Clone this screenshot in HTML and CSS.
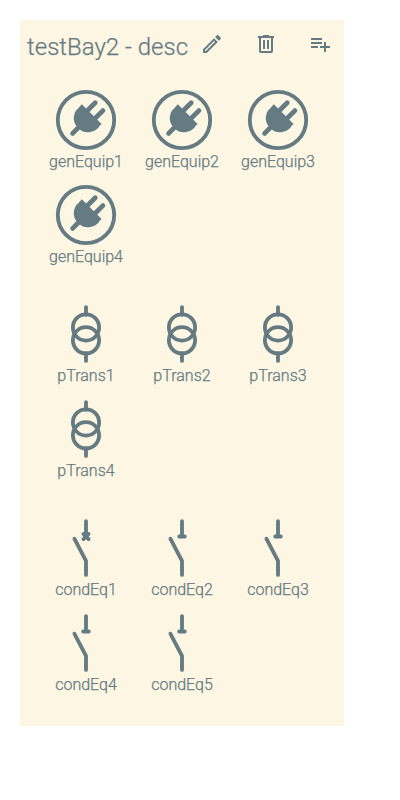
FILE: index.html
```
<!DOCTYPE html>
<html lang="en">
<head>
<meta charset="utf-8">
<title>testBay2</title>
<link rel="stylesheet" href="styles.css">
</head>
<body>
<svg class="defs" aria-hidden="true">
  <symbol id="general" viewBox="0 0 64 64">
    <circle class="line" cx="32" cy="32" r="28.2"/>
    <path class="solid" d="M27.8 16.2L47.6 36L45.2 38.2C44 41.5 38.8 44.2 33.5 44.2C30.5 44.2 28.5 43.5 26.8 42.2L21.8 37.2C19.5 34 19.2 29 20.6 25.5C22 21.5 24.5 20.5 26 18.2Z"/>
    <path class="prong" d="M34 22L41.2 14.8M41.7 29.8L48.9 22.6M18.6 45.4L27 37"/>
  </symbol>
  <symbol id="transformer" viewBox="0 0 25 25">
    <path class="wire" d="M12.5 2V5M12.5 20V23"/>
    <circle class="wire" cx="12.5" cy="9.95" r="5.12"/>
    <circle class="wire" cx="12.5" cy="14.95" r="5.12"/>
  </symbol>
  <symbol id="breaker" viewBox="0 0 25 25">
    <path class="wire" d="M12.5 2V8M12.5 23V17.5L8 8.9M11.5 7L13.5 9M13.5 7L11.5 9"/>
  </symbol>
  <symbol id="disconnector" viewBox="0 0 25 25">
    <path class="wire" d="M12.5 2V8M12.5 23V17.5L8 8.9M11.4 8H13.6"/>
  </symbol>
</svg>
<section class="bay">
  <header class="bar">
    <h2>testBay2 - desc</h2>
    <nav class="actions">
      <svg viewBox="0 0 24 24"><path d="M14.06 9.02l.92.92L5.92 19H5v-.92l9.06-9.06M17.66 3c-.25 0-.51.1-.7.29l-1.83 1.83 3.75 3.75 1.83-1.83c.39-.39.39-1.02 0-1.41l-2.34-2.34c-.2-.2-.45-.29-.71-.29zm-3.6 3.19L3 17.25V21h3.75L17.81 9.94l-3.75-3.75z"/></svg>
      <svg viewBox="0 0 24 24"><path fill-rule="evenodd" d="M7 21q-.825 0-1.412-.587Q5 19.825 5 19V6H4V4h5V3h6v1h5v2h-1v13q0 .825-.587 1.413Q17.825 21 17 21ZM17 6H7v13h10ZM9 17h2V8H9Zm4 0h2V8h-2Z"/></svg>
      <svg viewBox="0 0 24 24"><path d="M14 10H3v2h11v-2zm0-4H3v2h11V6zm4 8v-4h-2v4h-4v2h4v4h2v-4h4v-2h-4zM3 16h7v-2H3v2z"/></svg>
    </nav>
  </header>
  <div class="group">
    <figure><svg><use href="#general"/></svg><figcaption>genEquip1</figcaption></figure>
    <figure><svg><use href="#general"/></svg><figcaption>genEquip2</figcaption></figure>
    <figure><svg><use href="#general"/></svg><figcaption>genEquip3</figcaption></figure>
    <figure><svg><use href="#general"/></svg><figcaption>genEquip4</figcaption></figure>
  </div>
  <div class="group">
    <figure><svg><use href="#transformer"/></svg><figcaption>pTrans1</figcaption></figure>
    <figure><svg><use href="#transformer"/></svg><figcaption>pTrans2</figcaption></figure>
    <figure><svg><use href="#transformer"/></svg><figcaption>pTrans3</figcaption></figure>
    <figure><svg><use href="#transformer"/></svg><figcaption>pTrans4</figcaption></figure>
  </div>
  <div class="group">
    <figure><svg><use href="#breaker"/></svg><figcaption>condEq1</figcaption></figure>
    <figure><svg><use href="#disconnector"/></svg><figcaption>condEq2</figcaption></figure>
    <figure><svg><use href="#disconnector"/></svg><figcaption>condEq3</figcaption></figure>
    <figure><svg><use href="#disconnector"/></svg><figcaption>condEq4</figcaption></figure>
    <figure><svg><use href="#disconnector"/></svg><figcaption>condEq5</figcaption></figure>
  </div>
</section>
</body>
</html>
```
FILE: styles.css
```
body {
  margin: 0;
  padding: 20px;
  background: #fff;
  font-family: Roboto, sans-serif;
  font-weight: 300;
}

.defs {
  position: absolute;
  width: 0;
  height: 0;
}

.bay {
  box-sizing: border-box;
  width: 324px;
  height: 706px;
  background: #fdf6e3;
  color: #657b83;
  -webkit-text-stroke: 0.25px #657b83;
}

.bar {
  display: flex;
  justify-content: space-between;
  height: 68px;
  padding: 0 12px 0 7px;
}

h2 {
  margin: 0;
  font-size: 24px;
  font-weight: 300;
  line-height: 55px;
  white-space: nowrap;
}

.actions {
  display: flex;
  gap: 30px;
  padding-top: 12px;
}

.actions svg {
  width: 24px;
  height: 24px;
  fill: currentColor;
}

.group {
  display: grid;
  grid-template-columns: repeat(3, 96px);
  grid-auto-rows: 83px;
  row-gap: 12px;
  margin: 0 18px 36px;
}

figure {
  display: flex;
  flex-direction: column;
  align-items: center;
  margin: 0;
}

figure svg {
  width: 64px;
  height: 64px;
}

figcaption {
  font-size: 16px;
  line-height: 19px;
}

.line,
.wire,
.prong {
  fill: none;
  stroke: #657b83;
  stroke-linecap: round;
  stroke-linejoin: round;
}

.line {
  stroke-width: 3.84;
}

.wire {
  stroke-width: 1.5;
}

.prong {
  stroke-width: 4.8;
}

.solid {
  fill: #657b83;
}
```
